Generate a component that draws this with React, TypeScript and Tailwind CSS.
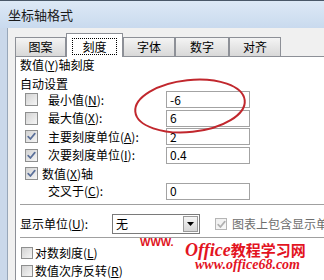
import type { ReactNode } from "react";

function Check({ checked, small, disabled }: { checked?: boolean; small?: boolean; disabled?: boolean }) {
  return (
    <span
      className={
        "flex shrink-0 items-center justify-center border bg-linear-to-br " +
        (small ? "h-[12px] w-[12px] " : "h-[13px] w-[13px] ") +
        (disabled
          ? "border-[#b5b5b5] from-[#eeeeee] to-[#f8f8f8]"
          : "border-[#8e8f8f] from-[#d2d2d2] to-[#f6f6f6]")
      }
    >
      {checked && (
        <svg width="9" height="9" viewBox="0 0 9 9" fill="none">
          <path
            d="M1.2 4.6 L3.4 7 L7.8 1.6"
            stroke={disabled ? "#b0b0b0" : "#5a6f99"}
            strokeWidth="1.7"
            strokeLinecap="round"
            strokeLinejoin="round"
          />
        </svg>
      )}
    </span>
  );
}

function Field({ value }: { value: string }) {
  return (
    <div className="flex h-[17px] w-[84px] shrink-0 items-center border border-[#a3a3a3] bg-white pl-[3px] leading-none">
      {value}
    </div>
  );
}

function U({ children }: { children: ReactNode }) {
  return <span className="underline underline-offset-1">{children}</span>;
}

function Tab({ label, w }: { label: string; w: string }) {
  return (
    <div
      className={
        "flex h-[19px] shrink-0 items-center justify-center border border-b-0 border-[#8d9097] bg-linear-to-b from-[#f4f4f4] to-[#d8d8d8] leading-none " +
        w
      }
    >
      {label}
    </div>
  );
}

export default function App() {
  return (
    <div className="relative h-[280px] w-[324px] overflow-hidden bg-[#f0f0f0] font-['Noto_Sans_CJK_SC',sans-serif] text-[12px] text-black">
      {/* Title bar */}
      <div className="flex h-[28px] items-center border-t border-[#4a5868] bg-linear-to-b from-[#dde9f6] to-[#c9daee] pl-[8px] text-[13px] leading-none text-[#1b1b1b]">
        坐标轴格式
      </div>

      <div className="flex h-[252px]">
        <div className="w-[8px] shrink-0 border-r border-[#98a7b9] bg-[#cad8ea]" />
        <div className="flex min-w-0 flex-1 flex-col pl-[7px] pt-[5px]">
          {/* Tabs */}
          <div className="flex h-[23px] items-end">
            <Tab label="图案" w="w-[51px]" />
            <div className="relative z-10 -mb-px flex h-[24px] w-[57px] shrink-0 items-start justify-center border border-b-0 border-[#8d9097] bg-white pt-[4px]">
              <span className="flex h-[17px] w-[45px] items-center justify-center border border-dotted border-black leading-none">
                刻度
              </span>
            </div>
            <Tab label="字体" w="w-[52px]" />
            <Tab label="数字" w="w-[54px]" />
            <Tab label="对齐" w="w-[52px]" />
          </div>

          {/* Panel */}
          <div className="flex min-w-0 flex-1 flex-col overflow-hidden border-l border-t border-[#8d9097] bg-white pl-[4px] leading-none whitespace-nowrap">
            <div className="flex h-[16px] items-center">
              数值(<U>Y</U>)轴刻度
            </div>
            <div className="mt-[5px] flex h-[14px] items-center">自动设置</div>

            <div className="flex h-[18px] items-center">
              <div className="flex w-[146px] shrink-0 items-center pl-[5px]">
                <Check />
                <span className="ml-[10px]">
                  最小值(<U>N</U>):
                </span>
              </div>
              <Field value="-6" />
            </div>
            <div className="flex h-[20px] items-center">
              <div className="flex w-[146px] shrink-0 items-center pl-[5px]">
                <Check />
                <span className="ml-[10px]">
                  最大值(<U>X</U>):
                </span>
              </div>
              <Field value="6" />
            </div>
            <div className="flex h-[18px] items-center">
              <div className="flex w-[146px] shrink-0 items-center pl-[5px]">
                <Check checked />
                <span className="ml-[10px]">
                  主要刻度单位(<U>A</U>):
                </span>
              </div>
              <Field value="2" />
            </div>
            <div className="flex h-[20px] items-center">
              <div className="flex w-[146px] shrink-0 items-center pl-[5px]">
                <Check checked />
                <span className="ml-[10px]">
                  次要刻度单位(<U>I</U>):
                </span>
              </div>
              <Field value="0.4" />
            </div>
            <div className="flex h-[18px] items-center pl-[5px]">
              <Check checked />
              <span className="ml-[4px]">
                数值(<U>X</U>)轴
              </span>
            </div>
            <div className="flex h-[18px] items-center">
              <div className="w-[146px] shrink-0 pl-[28px]">
                交叉于(<U>C</U>):
              </div>
              <Field value="0" />
            </div>

            <div className="mt-[4px] border-t border-[#a0a0a0]" />

            <div className="mt-[9px] flex h-[20px] items-center">
              <div className="w-[92px] shrink-0">
                显示单位(<U>U</U>):
              </div>
              <div className="flex h-[20px] w-[88px] shrink-0 items-center justify-between border border-[#7a7a7a] bg-white pl-[3px] pr-[1px]">
                <span>无</span>
                <span className="flex h-[16px] w-[15px] items-center justify-center border border-[#9a9a9a] bg-linear-to-b from-[#f6f6f6] to-[#d6d6d6]">
                  <svg width="7" height="4" viewBox="0 0 7 4">
                    <path d="M0 0 H7 L3.5 4 Z" fill="#000" />
                  </svg>
                </span>
              </div>
              <div className="ml-[15px] flex shrink-0 items-center text-[#6d6d6d]">
                <Check checked small disabled />
                <span className="ml-[5px]">图表上包含显示单位标签(D)</span>
              </div>
            </div>

            <div className="mt-[3px] border-t border-[#a0a0a0]" />

            <div className="mt-[6px] flex h-[18px] shrink-0 items-center pl-[1px]">
              <Check small />
              <span className="ml-[2px]">
                对数刻度(<U>L</U>)
              </span>
            </div>
            <div className="flex h-[18px] shrink-0 items-center pl-[1px]">
              <Check small />
              <span className="ml-[2px]">
                数值次序反转(<U>R</U>)
              </span>
            </div>
          </div>
        </div>
      </div>

      {/* Red annotation ring */}
      <svg className="absolute left-[130px] top-[72px]" width="125" height="70" viewBox="0 0 125 70">
        <ellipse
          cx="60"
          cy="34"
          rx="55"
          ry="26"
          transform="rotate(-6 60 34)"
          fill="none"
          stroke="#c1272d"
          strokeWidth="2"
        />
      </svg>

      {/* Watermark */}
      <div className="absolute left-[140px] top-[237px] font-['Liberation_Sans',sans-serif] text-[11px] font-bold leading-none text-[#e0141e]">
        WWW.
      </div>
      <div className="absolute left-[185px] top-[241px] flex items-baseline whitespace-nowrap leading-none text-[#e3141f] [text-shadow:0_0_2px_#fff,0_0_1px_#fff]">
        <span className="font-['Liberation_Serif',serif] text-[18px] font-bold italic">Office</span>
        <span className="text-[15px] font-bold">教程学习网</span>
      </div>
      <div className="absolute left-[195px] top-[258px] whitespace-nowrap font-['Liberation_Serif',serif] text-[14px] font-bold italic leading-none text-[#e3141f] [text-shadow:0_0_2px_#fff]">
        www.office68.com
      </div>
    </div>
  );
}
